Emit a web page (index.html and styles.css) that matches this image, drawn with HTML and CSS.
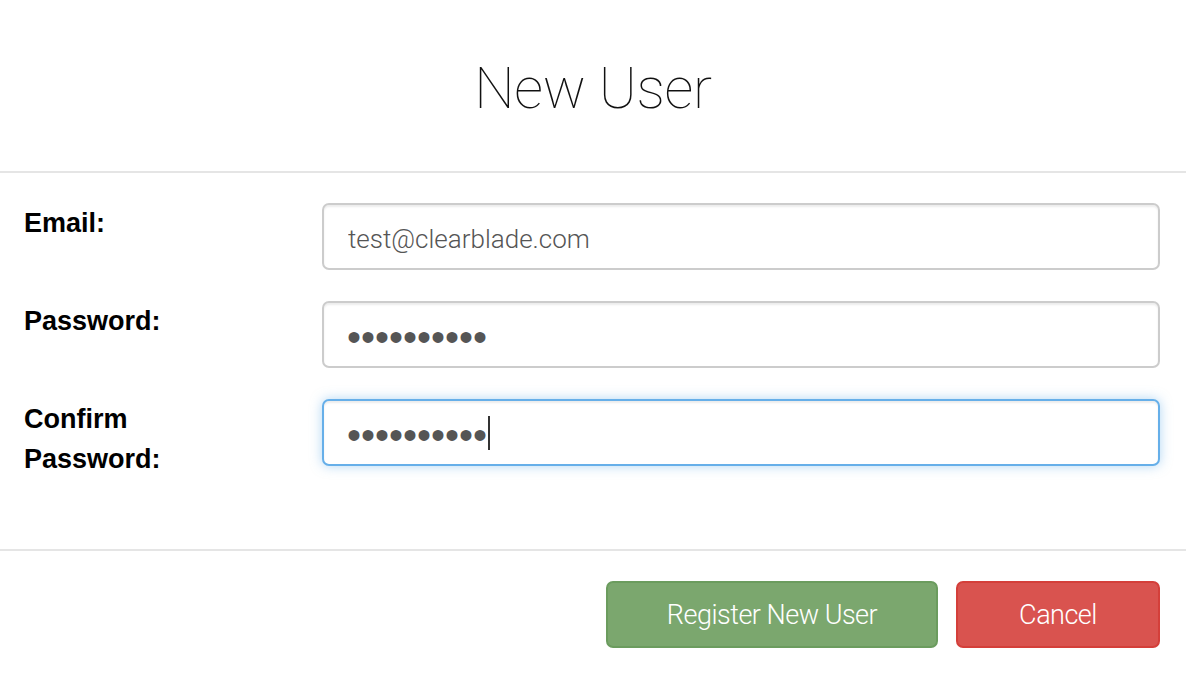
FILE: index.html
```html
<!DOCTYPE html>
<html lang="en">
<head>
<meta charset="utf-8">
<title>New User</title>
<link rel="stylesheet" href="styles.css">
</head>
<body>
<div class="modal">
  <header class="modal-header">
    <h1 class="modal-title">New User</h1>
  </header>
  <form class="modal-body">
    <div class="form-row">
      <label class="form-label" for="email">Email:</label>
      <div class="field">
        <input class="form-input" id="email" type="text" value="test@clearblade.com">
      </div>
    </div>
    <div class="form-row">
      <label class="form-label" for="pw">Password:</label>
      <div class="field">
        <input class="form-input" id="pw" type="password" value="clearblade">
      </div>
    </div>
    <div class="form-row">
      <label class="form-label" for="pw2">Confirm<br>Password:</label>
      <div class="field">
        <input class="form-input is-focused" id="pw2" type="password" value="clearblade">
        <span class="caret"></span>
      </div>
    </div>
  </form>
  <footer class="modal-footer">
    <button class="btn btn-success" type="button">Register New User</button>
    <button class="btn btn-danger" type="button">Cancel</button>
  </footer>
</div>
</body>
</html>
```
FILE: styles.css
```css
html, body {
  margin: 0;
  padding: 0;
  background: #fff;
}

.modal {
  width: 1186px;
  font-family: Roboto, "Liberation Sans", sans-serif;
  color: #000;
}

.modal-header {
  height: 171px;
  border-bottom: 2px solid #e5e5e5;
  display: flex;
  align-items: center;
  justify-content: center;
}

.modal-title {
  margin: 0;
  font-family: Roboto, sans-serif;
  font-weight: 100;
  font-size: 57px;
  line-height: 1;
  color: #111;
  padding-top: 6px;
  letter-spacing: -0.3px;
}

.modal-body {
  margin: 0;
  padding: 30px 26px 70px 24px;
  display: flex;
  flex-direction: column;
  gap: 31px;
}

.form-row {
  display: flex;
  align-items: flex-start;
}

.form-label {
  width: 298px;
  flex: none;
  font-family: "Liberation Sans", Arial, sans-serif;
  font-weight: bold;
  font-size: 27px;
  line-height: 40px;
  color: #000;
}

.field {
  position: relative;
  flex: 1;
}

.form-input {
  box-sizing: border-box;
  display: block;
  width: 100%;
  height: 67px;
  padding: 5px 24px 0;
  border: 2px solid #ccc;
  border-radius: 7px;
  background: #fff;
  font-family: Roboto, sans-serif;
  font-weight: 300;
  font-size: 26px;
  color: #555;
  box-shadow: inset 0 2px 2px rgba(0, 0, 0, 0.075);
  outline: none;
  caret-color: transparent;
}

.form-input[type="password"] {
  padding: 5px 24px 0 23px;
  font-family: "Liberation Sans", sans-serif;
  font-weight: normal;
  font-size: 40px;
  letter-spacing: 0;
}

.form-input.is-focused {
  border-color: #66afe9;
  box-shadow: inset 0 2px 2px rgba(0, 0, 0, 0.075), 0 0 12px rgba(102, 175, 233, 0.5);
}

.caret {
  position: absolute;
  left: 166px;
  top: 17px;
  width: 2px;
  height: 34px;
  background: #333;
}

.modal-footer {
  border-top: 2px solid #e5e5e5;
  padding: 30px 26px 28px 0;
  display: flex;
  justify-content: flex-end;
  gap: 18px;
}

.btn {
  box-sizing: border-box;
  height: 67px;
  border-radius: 7px;
  border: 2px solid transparent;
  font-family: Roboto, sans-serif;
  font-weight: 300;
  font-size: 27px;
  color: #fff;
  letter-spacing: -0.5px;
  cursor: pointer;
}

.btn-success {
  width: 332px;
  background: #7ba76e;
  border-color: #6b9c5e;
}

.btn-danger {
  width: 204px;
  background: #d9534f;
  border-color: #d43f3a;
}
```
